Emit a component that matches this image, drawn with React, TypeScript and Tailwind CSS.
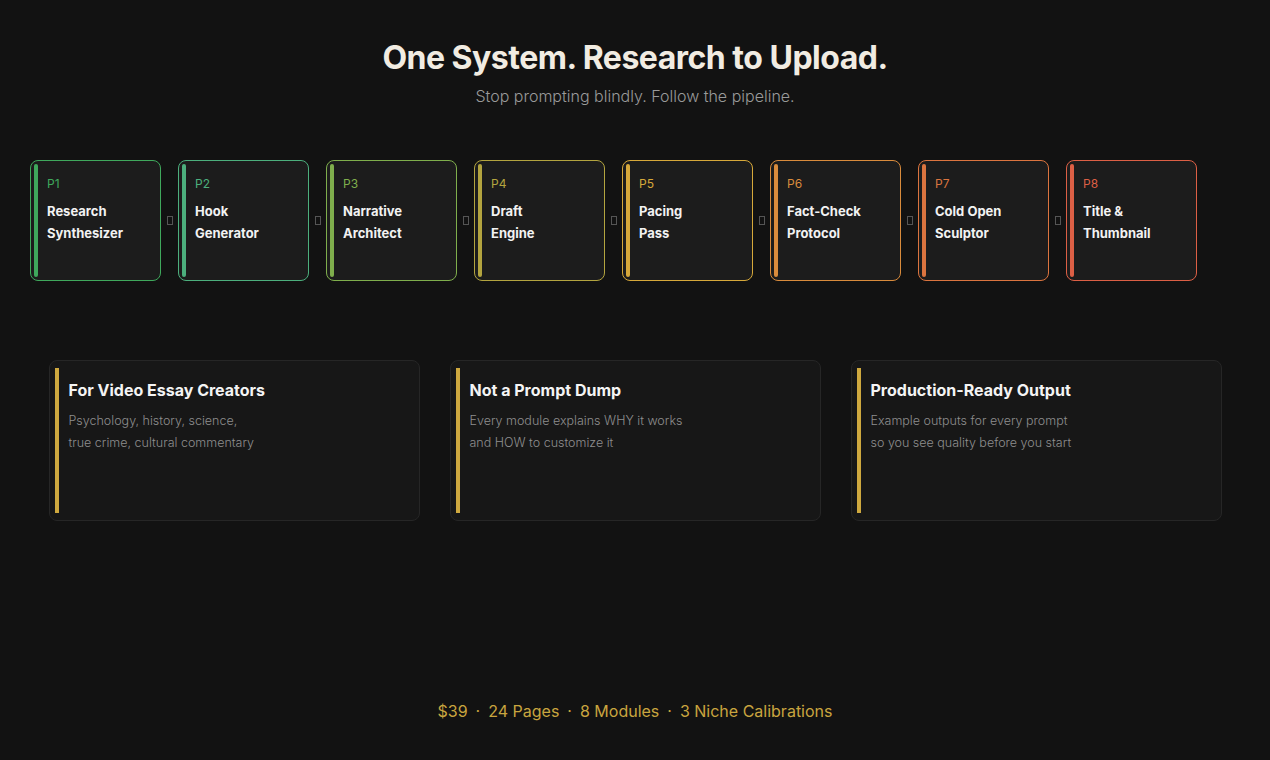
import React from 'react';

const steps = [
  { id: 'P1', title: ['Research', 'Synthesizer'], color: '#3fa85c' },
  { id: 'P2', title: ['Hook', 'Generator'], color: '#4caf7d' },
  { id: 'P3', title: ['Narrative', 'Architect'], color: '#7fae4c' },
  { id: 'P4', title: ['Draft', 'Engine'], color: '#b3a43f' },
  { id: 'P5', title: ['Pacing', 'Pass'], color: '#d6a83a' },
  { id: 'P6', title: ['Fact-Check', 'Protocol'], color: '#d98b3c' },
  { id: 'P7', title: ['Cold Open', 'Sculptor'], color: '#db743f' },
  { id: 'P8', title: ['Title &', 'Thumbnail'], color: '#dc5f45' },
];

const features = [
  { title: 'For Video Essay Creators', lines: ['Psychology, history, science,', 'true crime, cultural commentary'] },
  { title: 'Not a Prompt Dump', lines: ['Every module explains WHY it works', 'and HOW to customize it'] },
  { title: 'Production-Ready Output', lines: ['Example outputs for every prompt', 'so you see quality before you start'] },
];

const App: React.FC = () => {
  return (
    <div className="w-[1270px] h-[760px] bg-[#121212] text-white flex flex-col items-center" style={{ fontFamily: 'Inter, "Noto Sans", sans-serif' }}>
      <h1 className="mt-[38px] text-[32px] leading-[40px] font-bold tracking-[-0.5px] text-[#f1ece2]">One System. Research to Upload.</h1>
      <p className="mt-[6px] text-[16px] font-light text-[#9a9a9a]">Stop prompting blindly. Follow the pipeline.</p>

      {/* Pipeline */}
      <div className="mt-[52px] self-start ml-[30px] flex items-center">
        {steps.map((s, i) => (
          <React.Fragment key={s.id}>
            <div className="w-[131px] h-[121px] rounded-[8px] border bg-[#1c1c1c] p-[3px] flex" style={{ borderColor: s.color }}>
              <div className="w-[4px] rounded-sm" style={{ backgroundColor: s.color }} />
              <div className="pl-[9px] pt-[12px]">
                <div className="text-[12px] leading-[16px]" style={{ color: s.color }}>{s.id}</div>
                <div className="mt-[8px] text-[13px] leading-[22px] font-bold text-[#f2f2f2]">
                  {s.title[0]}<br />{s.title[1]}
                </div>
              </div>
            </div>
            {i < steps.length - 1 && (
              <div className="w-[17px] flex justify-center">
                <span className="w-[6px] h-[9px] border border-[#555]" />
              </div>
            )}
          </React.Fragment>
        ))}
      </div>

      {/* Features */}
      <div className="mt-[79px] flex gap-[30px]">
        {features.map((f) => (
          <div key={f.title} className="w-[371px] h-[161px] rounded-[8px] border border-[#262626] bg-[#171717] py-[7px] pl-[5px] flex">
            <div className="w-[4px] bg-[#cfa93f]" />
            <div className="pl-[10px] pt-[12px]">
              <div className="text-[16px] leading-[20px] font-bold text-[#f4f4f4]">{f.title}</div>
              <div className="mt-[10px] text-[12.5px] leading-[22px] font-light text-[#8e8e8e]">
                {f.lines[0]}<br />{f.lines[1]}
              </div>
            </div>
          </div>
        ))}
      </div>

      <div className="mt-[178px] text-[16px] text-[#c9a53f] flex gap-[8px]">
        <span>$39</span><span>·</span><span>24 Pages</span><span>·</span><span>8 Modules</span><span>·</span><span>3 Niche Calibrations</span>
      </div>
    </div>
  );
};

export default App;
